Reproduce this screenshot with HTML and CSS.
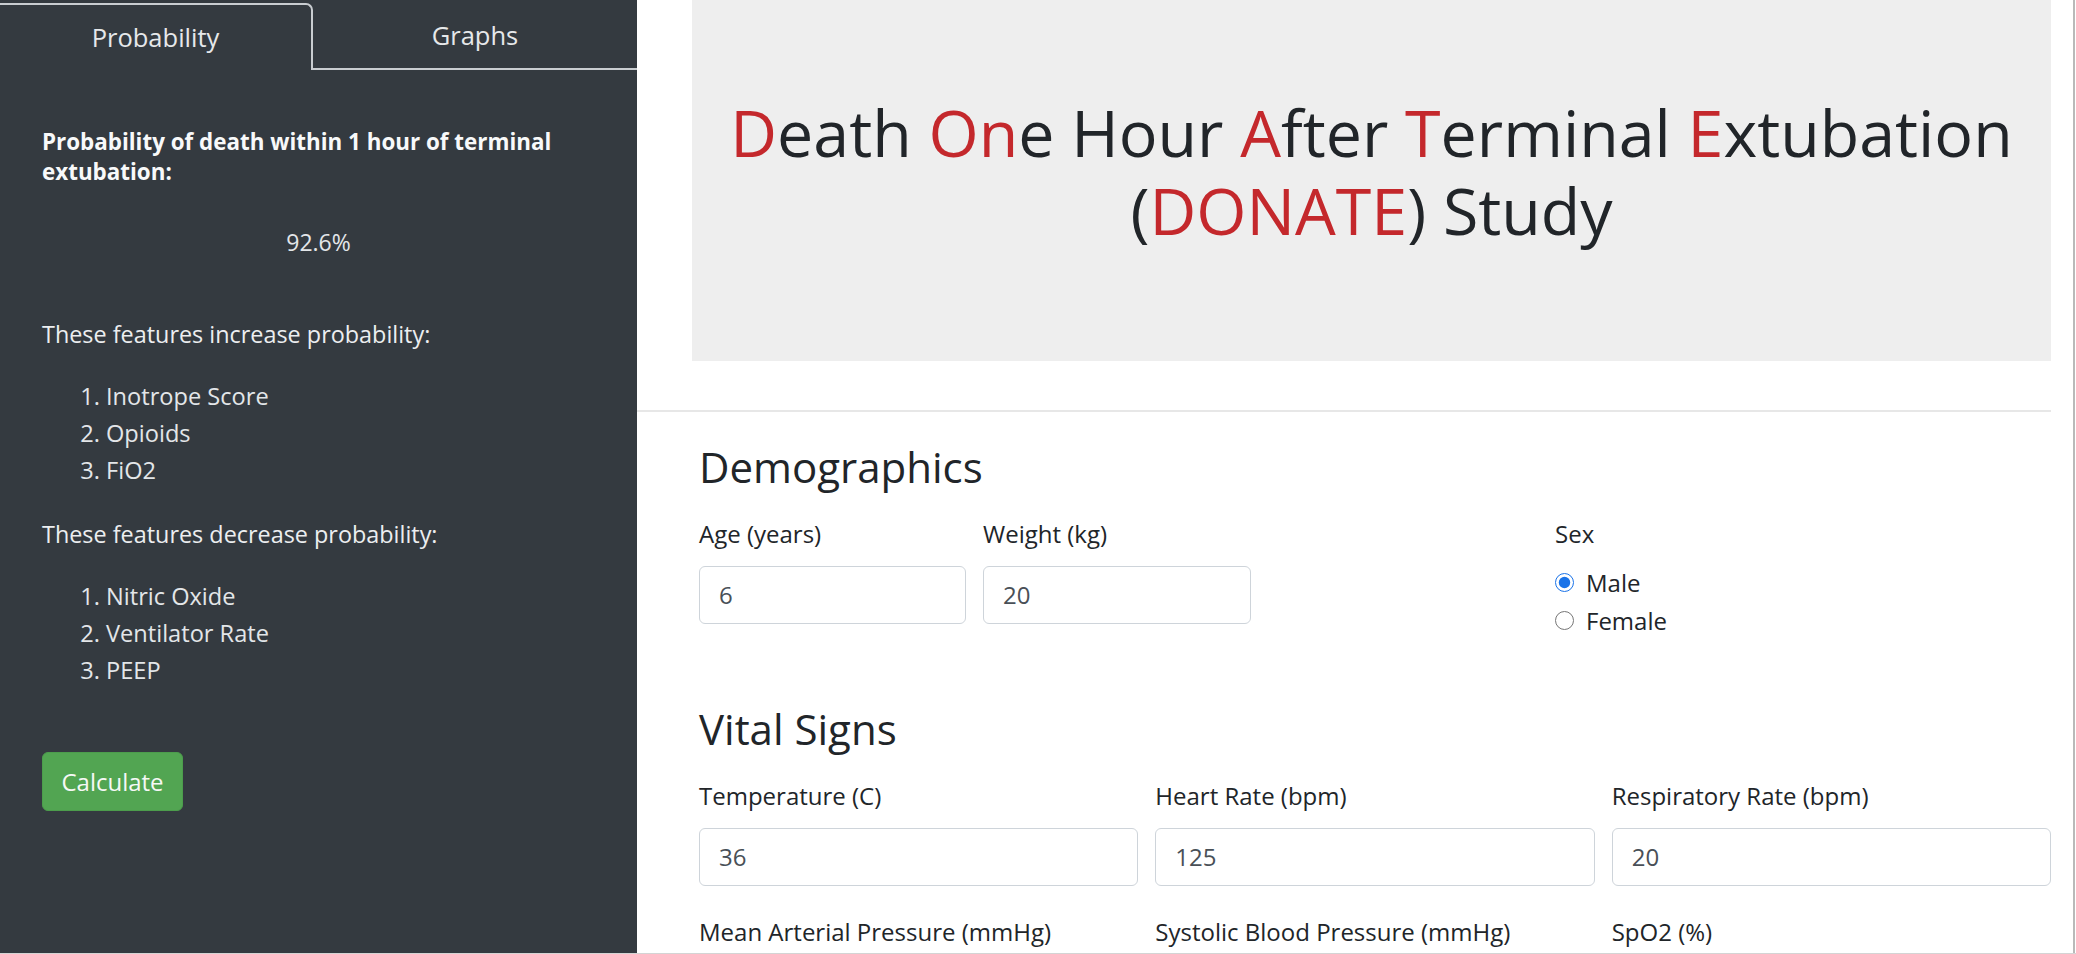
FILE: index.html
```html
<!DOCTYPE html>
<html lang="en">
<head>
<meta charset="utf-8">
<title>DONATE Study</title>
<link rel="stylesheet" href="styles.css">
</head>
<body>
<div class="app">
  <aside class="sidebar">
    <nav class="tabs">
      <div class="tab active">Probability</div>
      <div class="tab">Graphs</div>
    </nav>
    <div class="side-content">
      <h6 class="prob-title">Probability of death within 1 hour of terminal extubation:</h6>
      <p class="prob-value">92.6%</p>
      <p class="side-text">These features increase probability:</p>
      <ol class="feature-list">
        <li>Inotrope Score</li>
        <li>Opioids</li>
        <li>FiO2</li>
      </ol>
      <p class="side-text second">These features decrease probability:</p>
      <ol class="feature-list">
        <li>Nitric Oxide</li>
        <li>Ventilator Rate</li>
        <li>PEEP</li>
      </ol>
      <button class="btn-calc" type="button">Calculate</button>
    </div>
  </aside>

  <main class="main">
    <header class="jumbotron">
      <h1 class="title"><span class="red">D</span>eath <span class="red">On</span>e Hour <span class="red">A</span>fter <span class="red">T</span>erminal <span class="red">E</span>xtubation<br>(<span class="red">DONATE</span>) Study</h1>
    </header>
    <hr class="divider">

    <section class="form-section">
      <h3 class="section-title">Demographics</h3>
      <div class="demo-grid">
        <div class="field">
          <label class="field-label">Age (years)</label>
          <input class="form-control" type="text" value="6">
        </div>
        <div class="field">
          <label class="field-label">Weight (kg)</label>
          <input class="form-control" type="text" value="20">
        </div>
        <div class="field sex-field">
          <label class="field-label">Sex</label>
          <label class="radio-row"><input type="radio" name="sex" checked><span>Male</span></label>
          <label class="radio-row"><input type="radio" name="sex"><span>Female</span></label>
        </div>
      </div>
    </section>

    <section class="form-section vitals">
      <h3 class="section-title">Vital Signs</h3>
      <div class="vital-grid">
        <div class="field">
          <label class="field-label">Temperature (C)</label>
          <input class="form-control" type="text" value="36">
        </div>
        <div class="field">
          <label class="field-label">Heart Rate (bpm)</label>
          <input class="form-control" type="text" value="125">
        </div>
        <div class="field">
          <label class="field-label">Respiratory Rate (bpm)</label>
          <input class="form-control" type="text" value="20">
        </div>
        <div class="field">
          <label class="field-label">Mean Arterial Pressure (mmHg)</label>
          <input class="form-control" type="text">
        </div>
        <div class="field">
          <label class="field-label">Systolic Blood Pressure (mmHg)</label>
          <input class="form-control" type="text">
        </div>
        <div class="field">
          <label class="field-label">SpO2 (%)</label>
          <input class="form-control" type="text">
        </div>
      </div>
    </section>
  </main>
</div>
</body>
</html>
```
FILE: styles.css
```css
html, body {
  margin: 0;
  padding: 0;
  height: 954px;
  overflow: hidden;
  background: #ffffff;
}

body {
  font-family: "Open Sans", "Noto Sans", sans-serif;
  font-size: 24px;
  line-height: 37px;
  color: #212529;
}

.app {
  display: flex;
  height: 953px;
  border-bottom: 1px solid #d4d4d4;
}

/* ---------- Sidebar ---------- */
.sidebar {
  width: 637px;
  flex: 0 0 637px;
  background: #343a40;
  color: #e9ecef;
}

.tabs {
  display: flex;
  margin-top: 3px;
  height: 67px;
}

.tab {
  box-sizing: border-box;
  height: 67px;
  padding-top: 14px;
  text-align: center;
  font-size: 25.5px;
  line-height: 37px;
  color: #e6e8ea;
}

.tab.active {
  width: 313px;
  flex: 0 0 313px;
  border-top: 2px solid #c9cdd1;
  border-right: 2px solid #c9cdd1;
  border-top-right-radius: 7px;
}

.tab:not(.active) {
  flex: 1;
  border-bottom: 2px solid #c9cdd1;
}

.side-content {
  padding: 57px 42px 0 42px;
}

.prob-title {
  margin: 0;
  font-size: 22.4px;
  font-weight: 700;
  line-height: 30px;
  color: #f8f9fa;
}

.prob-value {
  margin: 37px 0 0 0;
  text-align: center;
  font-size: 23px;
  line-height: 36px;
  color: #e3e6e9;
}

.side-text {
  margin: 25px 0 0 0;
  font-size: 23.4px;
  line-height: 37px;
  color: #eceef0;
}

.prob-value + .side-text {
  margin-top: 56px;
}

.side-text.second {
  margin-top: 27px;
}

.feature-list {
  margin: 25px 0 0 0;
  padding-left: 64px;
  font-size: 23.6px;
  line-height: 37px;
  color: #e3e6e9;
}

.btn-calc {
  display: block;
  margin-top: 63px;
  width: 141px;
  height: 59px;
  padding: 0;
  border: 1px solid #4c9d4c;
  border-radius: 6px;
  background: #52a552;
  color: #f6f8f6;
  font-family: inherit;
  font-size: 24px;
  line-height: 36px;
}

/* ---------- Main ---------- */
.main {
  flex: 1;
  min-width: 0;
  padding-right: 22px;
  border-right: 2px solid #b9b9b9;
  margin-right: 1px;
}

.jumbotron {
  margin-left: 55px;
  height: 361px;
  box-sizing: border-box;
  padding-top: 93px;
  background: #eeeeee;
  text-align: center;
}

.title {
  margin: 0;
  font-size: 64.5px;
  font-weight: 500;
  line-height: 78px;
  color: #212529;
}

.red {
  color: #c4282c;
}

.divider {
  margin: 49px 0 0 0;
  border: 0;
  height: 2px;
  background: #e7e7e7;
}

.form-section {
  padding-left: 62px;
}

.section-title {
  margin: 29.6px 0 0 0;
  font-size: 42px;
  font-weight: 500;
  line-height: 50px;
  color: #212529;
}

.vitals .section-title {
  margin-top: 64px;
}

.field {
  display: flex;
  flex-direction: column;
}

.field-label {
  margin-top: 24.7px;
  margin-bottom: 13.3px;
  line-height: 36px;
  color: #212529;
}

.form-control {
  box-sizing: border-box;
  height: 58px;
  padding: 0 19px;
  border: 1px solid #ced4da;
  border-radius: 6px;
  font-family: inherit;
  font-size: 24px;
  color: #495057;
  background: #fff;
}

.demo-grid {
  display: grid;
  grid-template-columns: 267px 268px 1fr;
  column-gap: 17px;
}

.sex-field {
  padding-left: 287px;
}

.sex-field .field-label {
  margin-bottom: 11.5px;
}

.radio-row {
  display: flex;
  align-items: center;
  height: 38px;
  line-height: 38px;
  color: #212529;
}

.radio-row input {
  width: 19px;
  height: 19px;
  margin: 0 12px 0 0;
  accent-color: #1a73e8;
}

.vital-grid {
  display: grid;
  grid-template-columns: repeat(3, 1fr);
  column-gap: 17px;
}

.vital-grid .field:nth-child(n+4) .field-label {
  margin-top: 28.7px;
}
```
